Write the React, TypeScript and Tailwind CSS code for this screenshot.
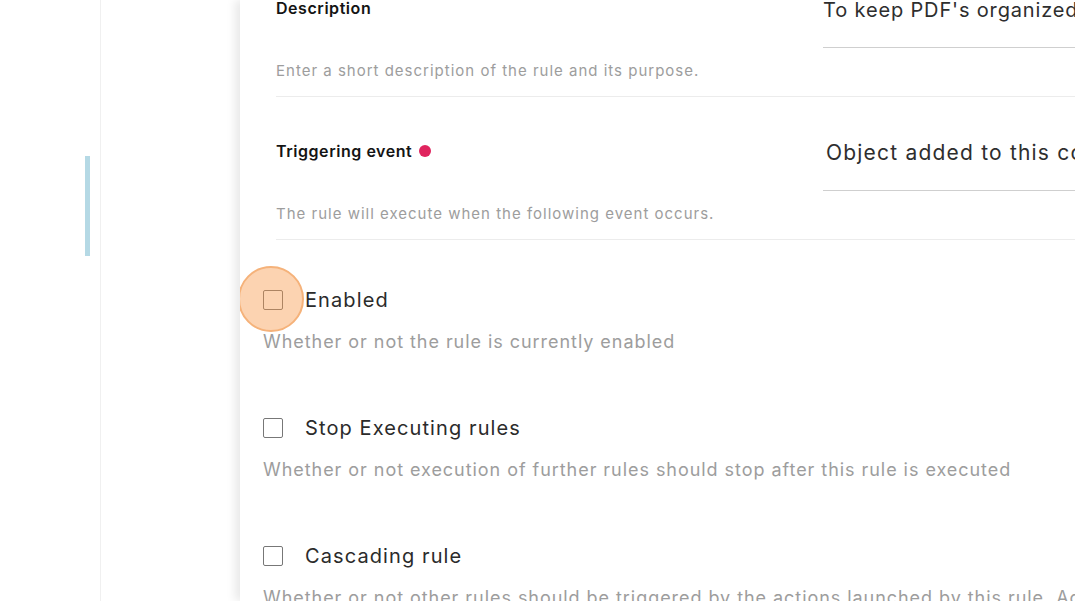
import React from "react";

const font = { fontFamily: "Inter, 'Noto Sans', sans-serif" };

type Field = { label: string; help: string; value: string; required?: boolean; valueClass: string };

const fields: Field[] = [
  {
    label: "Description",
    help: "Enter a short description of the rule and its purpose.",
    value: "To keep PDF's organized in one place",
    valueClass: "pl-0 text-[20px] tracking-[0.85px]",
  },
  {
    label: "Triggering event",
    help: "The rule will execute when the following event occurs.",
    value: "Object added to this collection",
    required: true,
    valueClass: "pl-[3px] text-[21px] tracking-[1.2px]",
  },
];

const options = [
  { label: "Enabled", help: "Whether or not the rule is currently enabled", focused: true },
  { label: "Stop Executing rules", help: "Whether or not execution of further rules should stop after this rule is executed" },
  {
    label: "Cascading rule",
    help: "Whether or not other rules should be triggered by the actions launched by this rule. Actions performed by this rule will not cascade.",
  },
];

const App: React.FC = () => {
  return (
    <div className="flex h-[601px] w-full overflow-hidden bg-white" style={font}>
      {/* Sidebar */}
      <div className="flex w-[240px] shrink-0">
        <div className="w-[101px] border-r border-[#f0f0f0] pl-[85px] pt-[156px]">
          <div className="h-[100px] w-[5px] bg-[#b5d9e5]"></div>
        </div>
      </div>

      {/* Panel */}
      <div className="relative z-10 flex-1 overflow-hidden bg-white shadow-[-5px_0_9px_rgba(0,0,0,0.09)]">
        <div className="mt-[-46px] pl-[36px]">
          {fields.map((f) => (
            <div key={f.label} className="flex border-b border-[#ececec]">
              <div className="w-[547px] shrink-0 pt-[42px] pb-[15px]">
                <div className="flex items-center gap-[7px] text-[16px] leading-[24px] font-semibold tracking-[0.55px] text-[#141414]">
                  {f.label}
                  {f.required && <span className="h-[12px] w-[12px] rounded-full bg-[#e0245e]"></span>}
                </div>
                <p className="mt-[41px] text-[15px] leading-[20px] tracking-[1px] text-[#9d9d9d]">{f.help}</p>
              </div>
              <div className="min-w-0 flex-1">
                <div className="mt-[42px] border-b border-[#cfcfcf] pb-[23px]">
                  <div className={`whitespace-nowrap ${f.valueClass} leading-[28px] text-[#2e2e2e]`}>{f.value}</div>
                </div>
              </div>
            </div>
          ))}
        </div>

        <div className="pl-[23px] pt-[46px]">
          {options.map((o) => (
            <div key={o.label} className="h-[128px]">
              <div className="flex h-[28px] items-center gap-[22px]">
                <div className="relative h-[20px] w-[20px] shrink-0">
                  <div className="h-[20px] w-[20px] rounded-[2px] border border-[#777777] bg-white"></div>
                  {o.focused && (
                    <div className="absolute left-[-25px] top-[-24px] h-[66px] w-[66px] rounded-full border-2 border-[#f5b27a] bg-[rgba(247,150,70,0.42)]"></div>
                  )}
                </div>
                <span className="whitespace-nowrap text-[20px] leading-[28px] tracking-[1.1px] text-[#2b2b2b]">{o.label}</span>
              </div>
              <p className="mt-[15px] whitespace-nowrap text-[18px] leading-[26px] tracking-[0.95px] text-[#9d9d9d]">{o.help}</p>
            </div>
          ))}
        </div>
      </div>
    </div>
  );
};

export default App;
